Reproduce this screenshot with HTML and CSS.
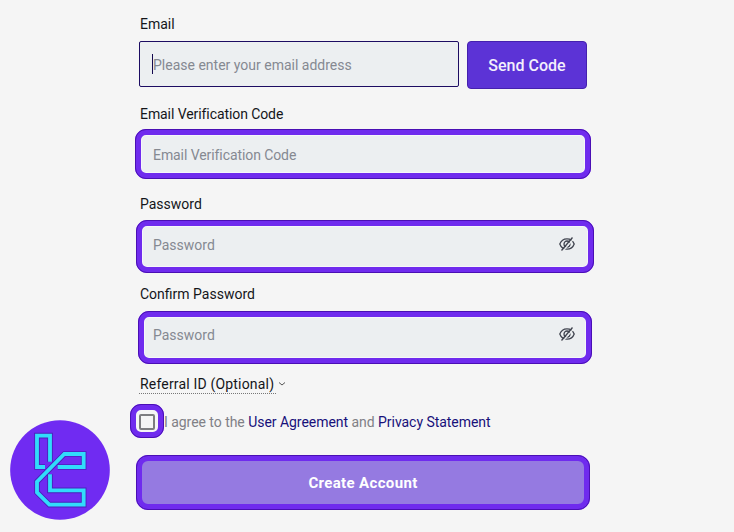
FILE: index.html
```html
<!DOCTYPE html>
<html lang="en">
<head>
    <meta charset="UTF-8">
    <meta name="viewport" content="width=device-width, initial-scale=1.0">
    <title>Create Account</title>
    <link rel="stylesheet" href="styles.css">
</head>
<body>
    <form class="signup">
        <div class="form-group">
            <label for="email">Email</label>
            <div class="email-row">
                <div class="field field-active">
                    <span class="caret"></span>
                    <input type="text" id="email" placeholder="Please enter your email address">
                </div>
                <button type="button" class="send-btn">Send Code</button>
            </div>
        </div>

        <div class="form-group">
            <label for="code" class="code-label">Email Verification Code</label>
            <div class="field ring ring-code">
                <input type="text" id="code" class="code-input" placeholder="Email Verification Code">
            </div>
        </div>

        <div class="form-group">
            <label for="password">Password</label>
            <div class="field ring ring-password">
                <input type="password" id="password" placeholder="Password">
                <svg class="eye" viewBox="0 0 16 14" fill="none">
                    <path d="M.8 7C2 3.700 4.800 1.800 8 1.800s6 1.900 7.200 5.200c-1.200 3.300-4 5.200-7.200 5.200S2 10.300.8 7z"/>
                    <circle cx="8" cy="7" r="3"/>
                    <path class="eye-gap" d="M4 14L15 1.500"/>
                    <path d="M2.500 13.500L13.500 .5"/>
                </svg>
            </div>
        </div>

        <div class="form-group">
            <label for="confirm">Confirm Password</label>
            <div class="field ring ring-confirm">
                <input type="password" id="confirm" placeholder="Password">
                <svg class="eye" viewBox="0 0 16 14" fill="none">
                    <path d="M.8 7C2 3.700 4.800 1.800 8 1.800s6 1.900 7.200 5.200c-1.200 3.300-4 5.200-7.200 5.200S2 10.300.8 7z"/>
                    <circle cx="8" cy="7" r="3"/>
                    <path class="eye-gap" d="M4 14L15 1.500"/>
                    <path d="M2.500 13.500L13.500 .5"/>
                </svg>
            </div>
        </div>

        <div class="referral">
            <span class="referral-text">Referral ID (Optional)</span>
            <svg class="chevron" viewBox="0 0 8 6" fill="none"><path d="M1 1.500l3 2.500 3-2.500"/></svg>
        </div>

        <div class="terms">
            <span class="check-ring"><span class="checkbox"></span></span>
            <p class="terms-text">I agree to the <a>User Agreement</a> and <a>Privacy Statement</a></p>
        </div>

        <button type="button" class="create-btn">Create Account</button>
    </form>

    <svg class="logo" viewBox="0 0 300 300" fill="none">
        <circle cx="150" cy="150" r="149.500"/>
        <g class="logo-edge">
            <path d="M120 125V47H81V141H105"/>
            <path d="M120 163V211H221V254H118L81 217V185L163 102H221V141H143"/>
        </g>
        <g class="logo-line">
            <path d="M120 125V47H81V141H105"/>
            <path d="M120 163V211H221V254H118L81 217V185L163 102H221V141H143"/>
        </g>
    </svg>
</body>
</html>
```
FILE: styles.css
```css
* {
    box-sizing: border-box;
}
body {
    margin: 0;
    height: 532px;
    overflow: hidden;
    background: #f5f5f5;
    font-family: Roboto, "Liberation Sans", sans-serif;
    font-size: 14px;
    color: #14151a;
}
.signup {
    width: 448px;
    margin-left: 139px;
    padding-top: 14px;
}
.form-group {
    height: 90px;
}
label {
    display: block;
    height: 27px;
    padding-left: 1px;
    line-height: 20px;
}
.code-label {
    letter-spacing: -0.08px;
}
.email-row {
    display: flex;
    gap: 8px;
}
.field {
    display: flex;
    align-items: center;
    background: #eceff1;
}
.field-active {
    width: 320px;
    height: 46px;
    padding-left: 13px;
    border: 1px solid #1c0c62;
    border-radius: 2px;
}
.caret {
    width: 1px;
    height: 20px;
    margin: 0 0 0 -1px;
    background: #14084e;
}
input {
    flex: 1;
    min-width: 0;
    height: 24px;
    padding: 0;
    border: none;
    outline: none;
    background: none;
    font: inherit;
}
.field-active input {
    margin-top: 2px;
}
input::placeholder {
    color: #858991;
    opacity: 1;
}
.code-input {
    letter-spacing: -0.08px;
}
.send-btn {
    width: 120px;
    height: 48px;
    padding: 0;
    border: 1px solid #4520ae;
    border-radius: 4px;
    background: #5c33d6;
    color: #f3effc;
    font: 500 16px Roboto, "Liberation Sans", sans-serif;
}
/* highlighted fields */
.ring {
    border: 6px solid #6f2bee;
    border-radius: 11px;
    outline: 1px solid #4a0fb4;
    outline-offset: -1px;
    box-shadow: inset 0 0 0 1px #f6f6fa;
}
.ring-code {
    width: 456px;
    height: 50px;
    margin: -2px 0 0 -4px;
    padding: 1px 12px 0;
}
.ring-password {
    width: 458px;
    height: 53px;
    margin: -1px 0 0 -3px;
    padding: 0 13px 4px 11px;
}
.ring-confirm {
    width: 454px;
    height: 53px;
    margin-left: -1px;
    padding: 0 11px 6px 9px;
}
.eye {
    width: 16px;
    height: 14px;
    margin-top: -2px;
    stroke: #40444f;
    stroke-width: 1.3;
}
.eye-gap {
    stroke: #eceff1;
}
.referral {
    display: flex;
    align-items: center;
    height: 20px;
}
.referral-text {
    width: 137px;
    height: 19px;
    padding-left: 1px;
    border-bottom: 1px dotted #777;
    line-height: 18px;
    letter-spacing: 0.18px;
    white-space: nowrap;
}
.chevron {
    width: 8px;
    height: 6px;
    margin-left: 2px;
    stroke: #555;
}
.terms {
    display: flex;
    align-items: center;
    height: 34px;
    margin: 10px 0 17px -9px;
}
.check-ring {
    display: flex;
    align-items: center;
    justify-content: center;
    width: 34px;
    height: 34px;
    border: 6px solid #6f2bee;
    border-radius: 11px;
    outline: 1px solid #4a0fb4;
    outline-offset: -1px;
}
.checkbox {
    width: 16px;
    height: 16px;
    margin-top: 1px;
    border: 2px solid #7d7d80;
    border-radius: 2px;
}
.terms-text {
    margin: 2px 0 0;
    color: #808086;
    letter-spacing: -0.04px;
    white-space: nowrap;
}
.terms-text a {
    color: #17107a;
}
.create-btn {
    display: block;
    width: 454px;
    height: 55px;
    margin-left: -3px;
    padding: 0;
    border: 6px solid #6f2bee;
    border-radius: 12px;
    outline: 1px solid #4a0fb4;
    outline-offset: -1px;
    background: #957ae1;
    color: #fff;
    font: bold 15px Roboto, "Liberation Sans", sans-serif;
    letter-spacing: 0.35px;
}
.logo {
    position: absolute;
    left: 10px;
    top: 420px;
    width: 100px;
    height: 100px;
}
.logo circle {
    fill: #702bf2;
}
.logo-edge {
    stroke: #4a22ba;
    stroke-width: 17;
}
.logo-line {
    stroke: #31dcfc;
    stroke-width: 11.5;
}
```
